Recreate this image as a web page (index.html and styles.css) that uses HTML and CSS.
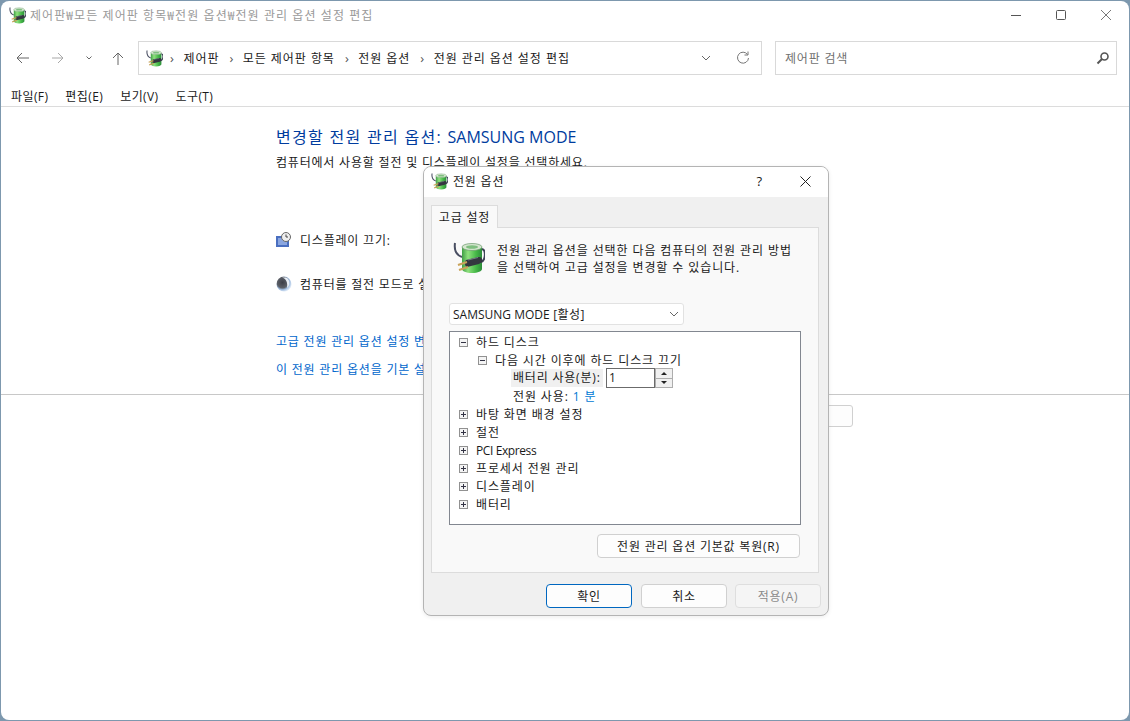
FILE: index.html
```html
<!DOCTYPE html>
<html lang="ko">
<head>
    <meta charset="UTF-8">
    <title>전원 옵션</title>
    <link rel="stylesheet" href="styles.css">
</head>
<body>
    <svg class="defs" width="0" height="0">
        <defs>
            <linearGradient id="cell" x1="0" x2="1" y1="0" y2="0">
                <stop offset="0" stop-color="#3f9f45"/>
                <stop offset=".3" stop-color="#8fe07e"/>
                <stop offset=".7" stop-color="#45b847"/>
                <stop offset="1" stop-color="#2c8c3a"/>
            </linearGradient>
            <radialGradient id="moon" cx=".4" cy=".4" r=".6">
                <stop offset="0" stop-color="#3c3e48"/>
                <stop offset=".6" stop-color="#5c6068"/>
                <stop offset=".8" stop-color="#9fbce0"/>
                <stop offset="1" stop-color="#dbe7f5"/>
            </radialGradient>
        </defs>
        <symbol id="power" viewBox="0 0 32 32">
            <path d="M2 1c-1 7 1 12 7 14" fill="none" stroke="#4a4f63" stroke-width="2"/>
            <path d="M9 5v22c0 2 4 4 10 4s10-2 10-4V5z" fill="url(#cell)"/>
            <ellipse cx="19" cy="5" rx="10" ry="3.500" fill="#d5e6cf" stroke="#6a9a6c" stroke-width=".7"/>
            <ellipse cx="19" cy="5" rx="6" ry="1.800" fill="#7fbf80"/>
            <path d="M29 7c4 1 4 11-1 13" fill="none" stroke="#3e4256" stroke-width="2"/>
            <path d="M13 18l13-3c2-.5 4 2 3 5l-3 2-12 3c-2 0-3-5-1-7z" fill="#33363f"/>
            <path d="M15 18l10-2.500" stroke="#777b88" stroke-width="1"/>
            <path d="M14 20l-9 3M15 25l-9 3" stroke="#c9a35a" stroke-width="2.200"/>
        </symbol>
    </svg>

    <div class="window">
        <div class="titlebar">
            <svg class="icon-16"><use href="#power"/></svg>
            <span class="title-text">제어판₩모든 제어판 항목₩전원 옵션₩전원 관리 옵션 설정 편집</span>
            <div class="window-btns">
                <svg width="10" height="10" viewBox="0 0 10 10"><path d="M0 5.500h10" stroke="#555"/></svg>
                <svg width="10" height="10" viewBox="0 0 10 10"><rect x=".5" y=".5" width="9" height="9" rx="1" fill="none" stroke="#555"/></svg>
                <svg width="10" height="10" viewBox="0 0 10 10"><path d="M0 0l10 10M10 0L0 10" stroke="#555" stroke-width=".8"/></svg>
            </div>
        </div>

        <div class="navbar">
            <div class="nav-btns">
                <svg width="13" height="12" viewBox="0 0 13 12"><path d="M13 6H1M6 1L1 6l5 5" fill="none" stroke="#666"/></svg>
                <svg class="nav-fwd" width="12" height="12" viewBox="0 0 12 12"><path d="M0 6h11M6 1l5 5-5 5" fill="none" stroke="#a8a8a8"/></svg>
                <svg class="nav-small" width="6" height="4" viewBox="0 0 6 4"><path d="M.5.500L3 3 5.500.500" fill="none" stroke="#666"/></svg>
                <svg class="nav-up" width="12" height="13" viewBox="0 0 12 13"><path d="M6 13V1M1 6l5-5 5 5" fill="none" stroke="#666"/></svg>
            </div>
            <div class="address">
                <svg class="icon-16"><use href="#power"/></svg>
                <span class="crumb-sep">›</span><span>제어판</span>
                <span class="crumb-sep">›</span><span>모든 제어판 항목</span>
                <span class="crumb-sep">›</span><span>전원 옵션</span>
                <span class="crumb-sep">›</span><span>전원 관리 옵션 설정 편집</span>
                <svg class="addr-down" width="10" height="6" viewBox="0 0 10 6"><path d="M1 1l4 4 4-4" fill="none" stroke="#666"/></svg>
                <svg class="addr-refresh" width="14" height="14" viewBox="0 0 14 14"><path d="M11.500 3.500A5.500 5.500 0 1 0 12.500 7M12 .5v3.500H8.500" fill="none" stroke="#777"/></svg>
            </div>
            <div class="search">
                <span>제어판 검색</span>
                <svg width="14" height="14" viewBox="0 0 14 14"><circle cx="8.500" cy="5.500" r="3.500" fill="none" stroke="#555" stroke-width="1.600"/><path d="M6 8l-4.500 4.500" stroke="#555" stroke-width="2"/></svg>
            </div>
        </div>

        <div class="menubar">
            <span>파일(F)</span><span>편집(E)</span><span>보기(V)</span><span>도구(T)</span>
        </div>

        <div class="content">
            <h1 class="plan-title">변경할 전원 관리 옵션: <span class="latin">SAMSUNG MODE</span></h1>
            <p class="plan-desc">컴퓨터에서 사용할 절전 및 디스플레이 설정을 선택하세요.</p>
            <div class="setting-row row-display">
                <svg width="16" height="16" viewBox="0 0 16 16"><rect x="0" y="4" width="13" height="11" fill="#4a6fc0"/><rect x="2" y="6" width="9" height="7" fill="#8aa6e0"/><circle cx="10" cy="5" r="4.500" fill="#eee" stroke="#666"/><path d="M10 2.500V5h2" fill="none" stroke="#444"/></svg>
                <span>디스플레이 끄기:</span>
            </div>
            <div class="setting-row row-sleep">
                <svg width="16" height="16" viewBox="0 0 16 16"><circle cx="8" cy="8" r="7.500" fill="url(#moon)"/><path d="M6 1.500c4 1 6 5 5 10.500 3-2 4-8-1-10.500z" fill="#e8eef6"/></svg>
                <span>컴퓨터를 절전 모드로 설정:</span>
            </div>
            <a class="link link-first">고급 전원 관리 옵션 설정 변경</a>
            <a class="link">이 전원 관리 옵션을 기본 설정으로 복원</a>
        </div>

        <div class="footer">
            <button class="back-btn"></button>
        </div>
    </div>

    <div class="dialog">
        <div class="dialog-title">
            <svg class="icon-16"><use href="#power"/></svg>
            <span>전원 옵션</span>
            <span class="help">?</span>
            <svg class="dialog-close" width="11" height="11" viewBox="0 0 11 11"><path d="M.5.500l10 10M10.500.500l-10 10" stroke="#222"/></svg>
        </div>
        <div class="dialog-body">
            <div class="tab">고급 설정</div>
            <div class="panel">
                <div class="intro">
                    <svg class="intro-icon"><use href="#power"/></svg>
                    <p>전원 관리 옵션을 선택한 다음 컴퓨터의 전원 관리 방법<br>을 선택하여 고급 설정을 변경할 수 있습니다.</p>
                </div>
                <div class="plan-select">
                    <span><span class="latin">SAMSUNG MODE</span> [활성]</span>
                    <svg width="10" height="6" viewBox="0 0 10 6"><path d="M1 1l4 4 4-4" fill="none" stroke="#666"/></svg>
                </div>
                <div class="tree">
                    <div class="node"><i class="box minus"></i>하드 디스크</div>
                    <div class="node level-1"><i class="box minus"></i>다음 시간 이후에 하드 디스크 끄기</div>
                    <div class="node level-2">
                        <span class="selected">배터리 사용(분):</span>
                        <span class="spin-input">1</span>
                        <span class="spin-btns"><span class="spin-half"><b class="up"></b></span><span class="spin-half"><b class="down"></b></span></span>
                    </div>
                    <div class="node level-2">전원 사용: <span class="value">1 분</span></div>
                    <div class="node"><i class="box plus"></i>바탕 화면 배경 설정</div>
                    <div class="node"><i class="box plus"></i>절전</div>
                    <div class="node"><i class="box plus"></i><span class="latin-tight">PCI Express</span></div>
                    <div class="node"><i class="box plus"></i>프로세서 전원 관리</div>
                    <div class="node"><i class="box plus"></i>디스플레이</div>
                    <div class="node"><i class="box plus"></i>배터리</div>
                </div>
                <div class="restore-row">
                    <button class="btn restore">전원 관리 옵션 기본값 복원(R)</button>
                </div>
            </div>
            <div class="dialog-actions">
                <button class="btn primary">확인</button>
                <button class="btn">취소</button>
                <button class="btn disabled">적용(A)</button>
            </div>
        </div>
    </div>
</body>
</html>
```

FILE: styles.css
```css
* {
    box-sizing: border-box;
}

html, body {
    margin: 0;
    height: 100%;
    overflow: hidden;
}

body {
    background: #7d98ae;
    color: #1a1a1a;
    font-family: "Open Sans", "Noto Sans CJK KR", sans-serif;
    font-size: 12px;
    letter-spacing: .8px;
}

.defs {
    position: absolute;
}

.icon-16 {
    width: 17px;
    height: 17px;
    flex: none;
}

.latin {
    letter-spacing: 0;
}

.latin-tight {
    letter-spacing: -.4px;
}

/* main window */
.window {
    height: 719px;
    margin: 1px 1px 0;
    background: #fff;
    border-radius: 8px;
    display: flex;
    flex-direction: column;
}

.titlebar {
    height: 30px;
    display: flex;
    align-items: center;
    padding: 0 0 2px 8px;
    gap: 4px;
}

.title-text {
    color: #9a9a9a;
    letter-spacing: 1.08px;
}

.window-btns {
    margin-left: auto;
    display: flex;
    gap: 35px;
    padding-right: 18px;
    align-items: center;
}

.navbar {
    height: 34px;
    margin-top: 10px;
    display: flex;
    align-items: center;
    padding-right: 12px;
}

.nav-btns {
    width: 137px;
    padding-left: 15px;
    display: flex;
    align-items: center;
}

.nav-fwd {
    margin-left: 23px;
}

.nav-small {
    margin-left: 22px;
}

.nav-up {
    margin-left: 20px;
}

.address {
    flex: 1;
    height: 34px;
    border: 1px solid #d9d9d9;
    display: flex;
    align-items: center;
    padding: 0 11px 0 7px;
    gap: 8px;
    letter-spacing: .95px;
}

.address .icon-16 {
    margin-right: -3px;
}

.crumb-sep {
    color: #555;
    font-size: 13px;
    margin: 0 1.5px 0 2px;
    letter-spacing: 0;
}

.addr-down {
    margin-left: auto;
}

.addr-refresh {
    margin-left: 17px;
}

.search {
    width: 342px;
    height: 34px;
    margin-left: 13px;
    border: 1px solid #d9d9d9;
    display: flex;
    align-items: center;
    justify-content: space-between;
    padding: 0 6px 0 9px;
    color: #707070;
}

.menubar {
    height: 32px;
    display: flex;
    align-items: center;
    gap: 17px;
    padding: 11px 0 0 10px;
    border-bottom: 1px solid #dcdcdc;
    letter-spacing: .4px;
}

.content {
    height: 288px;
    padding: 20px 0 0 275px;
    border-bottom: 1px solid #c8c8c8;
}

.plan-title {
    margin: 0;
    color: #003c9e;
    font-size: 16px;
    font-weight: 400;
    line-height: 20px;
    letter-spacing: 1.3px;
}

.plan-desc {
    margin: 8px 0 0;
    line-height: 16px;
}

.setting-row {
    display: flex;
    align-items: center;
    gap: 8px;
    height: 20px;
}

.row-display {
    margin-top: 59px;
}

.row-sleep {
    margin-top: 24px;
}

.link {
    display: block;
    color: #0066cc;
    line-height: 16px;
    margin-top: 12px;
}

.link-first {
    margin-top: 40px;
}

.footer {
    flex: 1;
    padding: 10px 0 0 760px;
}

.back-btn {
    display: block;
    width: 92px;
    height: 22px;
    background: #fdfdfd;
    border: 1px solid #d0d0d0;
    border-radius: 3px;
}

/* dialog over the window */
.dialog {
    position: absolute;
    left: 423px;
    top: 166px;
    width: 406px;
    height: 450px;
    background: #f0f0f0;
    border: 1px solid #b4b4b4;
    border-radius: 8px;
    overflow: hidden;
    box-shadow: 0 1px 4px rgba(0, 0, 0, .08);
}

.dialog-title {
    height: 30px;
    background: #fff;
    display: flex;
    align-items: center;
    padding: 0 17px 2px 7px;
    gap: 5px;
}

.help {
    margin-left: auto;
    margin-right: 32px;
    font-size: 13px;
}

.dialog-body {
    padding: 8px 7px 0;
}

.tab {
    width: 67px;
    height: 23px;
    background: #f9f9f9;
    border: 1px solid #dcdcdc;
    border-bottom: none;
    display: flex;
    align-items: center;
    justify-content: center;
    position: relative;
    z-index: 1;
    margin-bottom: -1px;
}

.panel {
    height: 346px;
    margin-right: 2px;
    background: #f9f9f9;
    border: 1px solid #dcdcdc;
    padding: 0 17px;
}

.intro {
    height: 75px;
    display: flex;
    gap: 12px;
    padding-top: 14px;
    padding-left: 4px;
}

.intro-icon {
    width: 32px;
    height: 32px;
    flex: none;
}

.intro p {
    margin: 0;
    line-height: 17px;
    letter-spacing: .9px;
}

.plan-select {
    width: 235px;
    height: 22px;
    background: #fff;
    border: 1px solid #e2e2e2;
    border-radius: 3px;
    display: flex;
    align-items: center;
    justify-content: space-between;
    padding: 0 4px 0 3px;
    letter-spacing: .4px;
}

.tree {
    height: 194px;
    margin-top: 6px;
    background: #fff;
    border: 1px solid #828790;
    padding-top: 1px;
}

.node {
    height: 18px;
    display: flex;
    align-items: center;
    padding-left: 9px;
    white-space: pre;
    letter-spacing: .88px;
}

.level-1 {
    padding-left: 28px;
}

.level-2 {
    padding-left: 63px;
}

.box {
    width: 9px;
    height: 9px;
    border: 1px solid #919191;
    background: #f4f4f4;
    margin-right: 8px;
    position: relative;
    flex: none;
}

.box::before {
    content: "";
    position: absolute;
    left: 1px;
    top: 3px;
    width: 5px;
    height: 1px;
    background: #334;
}

.plus::after {
    content: "";
    position: absolute;
    left: 3px;
    top: 1px;
    width: 1px;
    height: 5px;
    background: #334;
}

.selected {
    width: 92px;
    flex: none;
    background: #f0f0f0;
    height: 18px;
    line-height: 18px;
    padding: 0 0 0 2px;
    margin-left: -2px;
    letter-spacing: .8px;
}

.spin-input {
    width: 49px;
    height: 20px;
    background: #fff;
    border: 1px solid #6b6b6b;
    margin-left: 3px;
    padding-left: 2px;
    line-height: 17px;
}

.spin-btns {
    width: 18px;
    height: 20px;
    background: #f0f0f0;
    border: 1px solid #adadad;
    display: flex;
    flex-direction: column;
}

.spin-half {
    flex: 1;
    display: flex;
    align-items: center;
    justify-content: center;
}

.spin-half + .spin-half {
    border-top: 1px solid #adadad;
}

.up {
    border: 3px solid transparent;
    border-top: none;
    border-bottom: 3px solid #222;
}

.down {
    border: 3px solid transparent;
    border-bottom: none;
    border-top: 3px solid #222;
}

.value {
    color: #0078d4;
}

.restore-row {
    display: flex;
    justify-content: flex-end;
    padding: 9px 1px 0 0;
}

.btn {
    height: 24px;
    background: #fdfdfd;
    border: 1px solid #d0d0d0;
    border-radius: 4px;
    font: inherit;
    letter-spacing: inherit;
    color: #1a1a1a;
    padding: 0;
}

.restore {
    width: 203px;
}

.dialog-actions {
    display: flex;
    justify-content: flex-end;
    gap: 9px;
    padding: 11px 0 0;
}

.dialog-actions .btn {
    width: 86px;
}

.primary {
    border: 1px solid #0067c0;
}

.dialog-actions .disabled {
    margin-left: -1px;
    background: #f5f5f5;
    border-color: #dedede;
    color: #8a8a8a;
}
```
